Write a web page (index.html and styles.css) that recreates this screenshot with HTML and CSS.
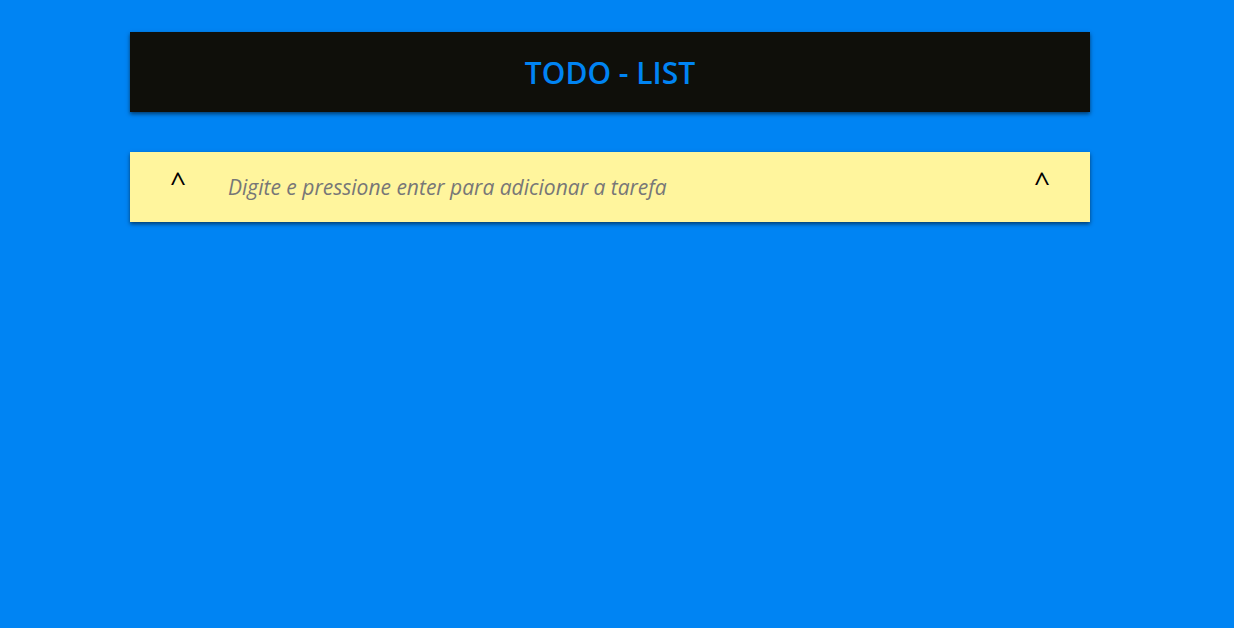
FILE: index.html
```html
<!DOCTYPE html>
<html lang="pt-BR">
<head>
<meta charset="utf-8">
<title>Todo List</title>
<link rel="stylesheet" href="styles.css">
</head>
<body>
<main class="app">
  <header class="header">
    <h1 class="title">TODO - LIST</h1>
  </header>
  <div class="new-task">
    <button class="caret-btn" type="button">^</button>
    <input class="task-input" type="text" placeholder="Digite e pressione enter para adicionar a tarefa">
    <button class="caret-btn" type="button">^</button>
  </div>
</main>
</body>
</html>
```
FILE: styles.css
```css
* { box-sizing: border-box; }
html, body { margin: 0; padding: 0; }
body {
  background: #0084f3;
  font-family: "Open Sans", "Noto Sans", sans-serif;
  min-height: 628px;
  padding-right: 14px;
}
.app {
  width: 960px;
  margin: 32px auto 0;
  display: flex;
  flex-direction: column;
  gap: 40px;
}
.header {
  height: 80px;
  background: #0f0f0a;
  display: flex;
  align-items: center;
  justify-content: center;
  box-shadow: 0 2px 4px rgba(0, 0, 0, 0.55);
}
.title {
  margin: 0;
  color: #0084f3;
  font-size: 30px;
  font-weight: 600;
  letter-spacing: 0;
  padding-top: 1px;
}
.new-task {
  height: 70px;
  background: #fff59d;
  display: grid;
  grid-template-columns: 96px 1fr 96px;
  align-items: center;
  box-shadow: 0 2px 4px rgba(0, 0, 0, 0.55);
}
.caret-btn {
  border: 0;
  background: transparent;
  font-family: "Open Sans", sans-serif;
  font-size: 28px;
  font-weight: 500;
  color: #000;
  padding: 0;
  height: 100%;
  display: flex;
  align-items: center;
  justify-content: center;
  padding-bottom: 12px;
}
.task-input {
  border: 0;
  background: transparent;
  outline: none;
  font-family: "Open Sans", sans-serif;
  font-style: italic;
  font-size: 21px;
  color: #333;
  padding: 0 2px;
  height: 100%;
}
.task-input::placeholder {
  color: #777;
  opacity: 1;
}
```
